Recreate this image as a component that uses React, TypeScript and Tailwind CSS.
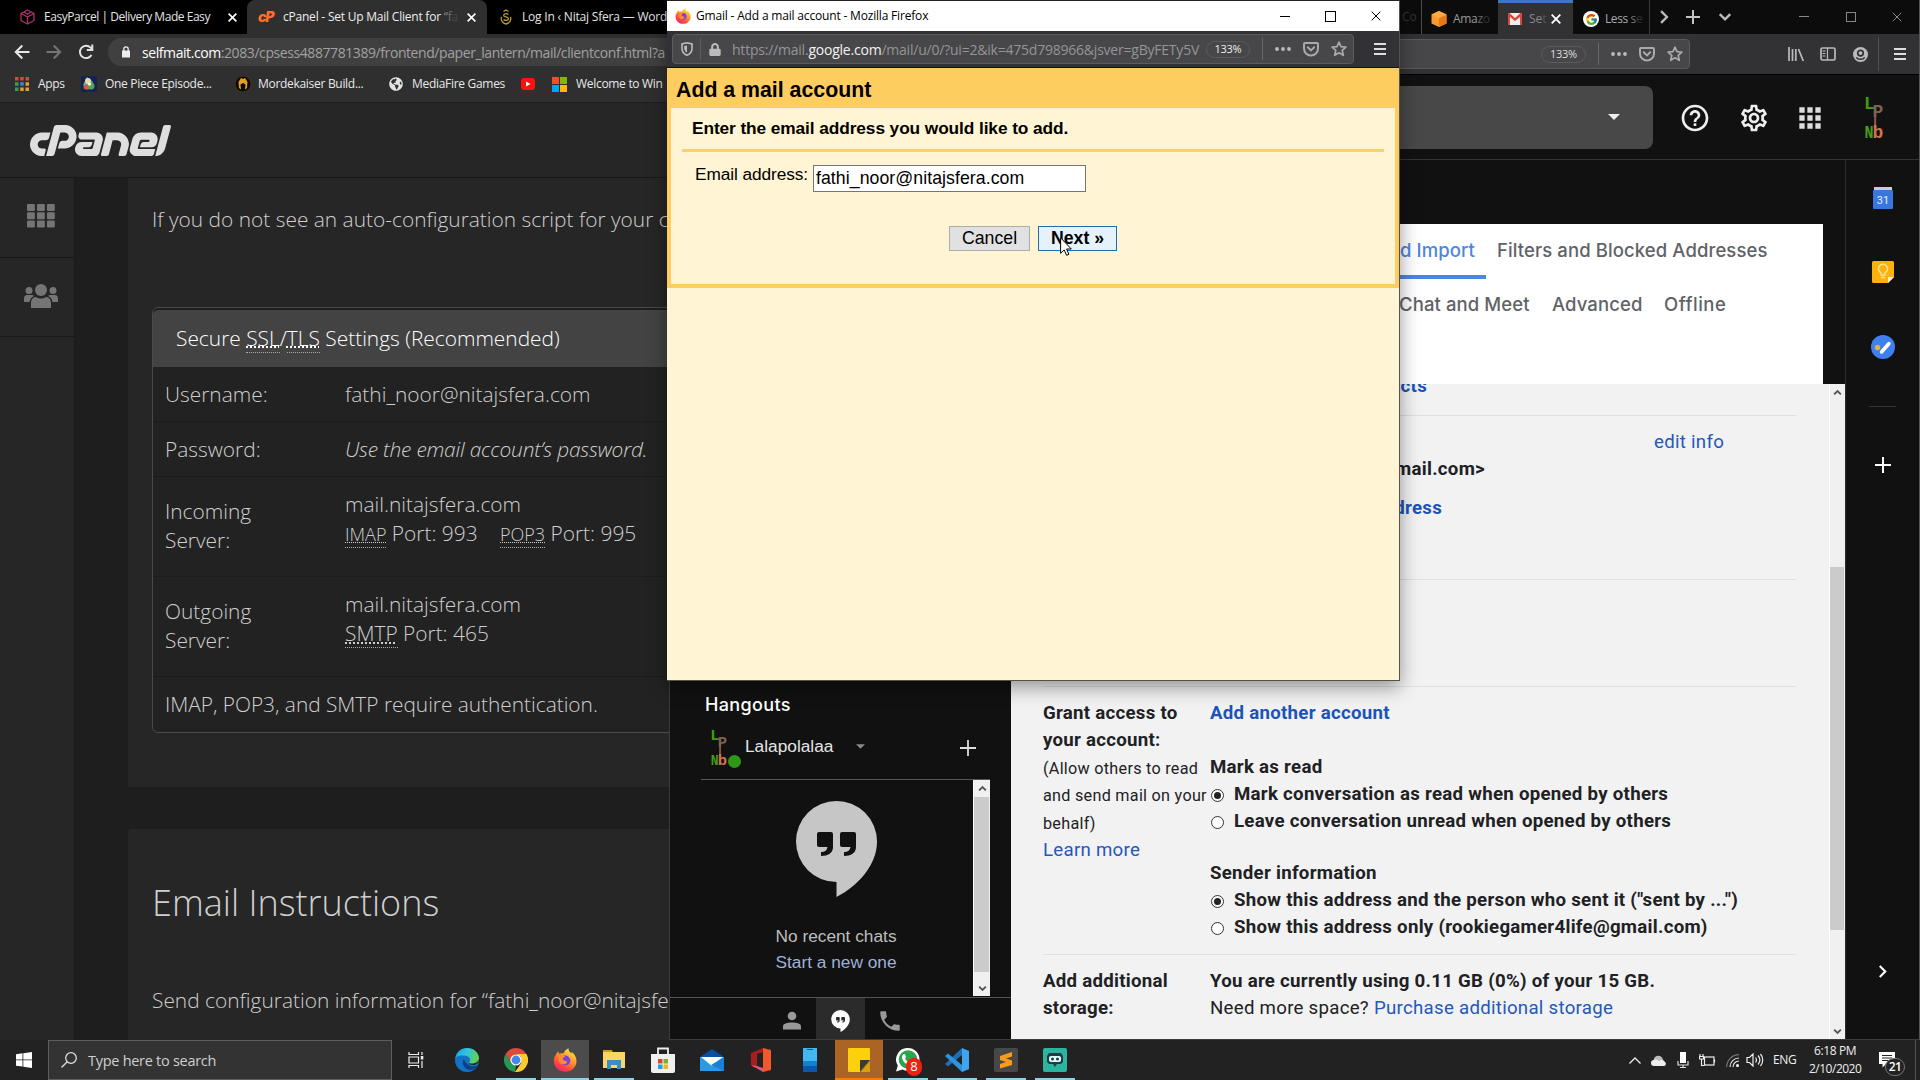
import React from "react";
import { MdApps, MdHelpOutline, MdOutlineSettings, MdPhone } from "react-icons/md";
import { FcGoogle } from "react-icons/fc";
import { FaGlobeAmericas, FaLock } from "react-icons/fa";
import { SiCpanel } from "react-icons/si";

const ui = "whitespace-nowrap shrink-0 font-['Open_Sans',sans-serif]";
const os = "whitespace-nowrap shrink-0 font-['Open_Sans',sans-serif] font-light";
const rb = "whitespace-nowrap shrink-0 font-['Roboto',sans-serif]";
const ar = "whitespace-nowrap shrink-0 font-['Liberation_Sans',Arial,sans-serif]";
const gs = "whitespace-nowrap shrink-0 font-['Inter',sans-serif]";

const X = ({ c }: { c: string }) => (
  <svg viewBox="0 0 10 10" className={c} fill="none" stroke="currentColor">
    <path d="M0.7 0.7L9.3 9.3M9.3 0.7L0.7 9.3" />
  </svg>
);

const Hamburger = ({ c }: { c: string }) => (
  <svg viewBox="0 0 12 12" className={c} fill="currentColor">
    <path d="M0 0h12v2H0zM0 5h12v2H0zM0 10h12v2H0z" />
  </svg>
);

const Dots = ({ c }: { c: string }) => (
  <svg viewBox="0 0 16 4" className={c} fill="currentColor">
    <circle cx="2" cy="2" r="1.9" /><circle cx="8" cy="2" r="1.9" /><circle cx="14" cy="2" r="1.9" />
  </svg>
);

const Pocket = ({ c }: { c: string }) => (
  <svg viewBox="0 0 16 16" className={c} fill="none" stroke="currentColor" strokeWidth="2">
    <path d="M2 2h12a1 1 0 0 1 1 1v4.5a7 7 0 0 1-14 0V3a1 1 0 0 1 1-1z" />
    <path d="M4.8 6.3L8 9.4l3.2-3.1" strokeLinecap="round" />
  </svg>
);

const Star = ({ c }: { c: string }) => (
  <svg viewBox="0 0 16 16" className={c} fill="none" stroke="currentColor" strokeWidth="1.7" strokeLinejoin="round">
    <path d="M8 1.2l2 4.5 4.9.5-3.7 3.2 1.1 4.9L8 11.8l-4.3 2.5 1.1-4.9L1.1 6.2 6 5.7z" />
  </svg>
);

const Firefox = ({ c }: { c: string }) => (
  <svg viewBox="0 0 24 24" className={c}>
    <defs>
      <linearGradient id="fx" x1="0.8" y1="0" x2="0.2" y2="1">
        <stop offset="0" stopColor="#fff04a" /><stop offset="0.4" stopColor="#ff9a2a" />
        <stop offset="0.75" stopColor="#ff4343" /><stop offset="1" stopColor="#e8207c" />
      </linearGradient>
    </defs>
    <path fill="url(#fx)" d="M3.2 6.2C4 4.5 5 3.4 5.3 3.2c0 1 .4 2 .9 2.6C8 5 9.500 5 10.500 5.400 11.500 2.500 14 .8 15.500.2c-.3 2 1 3.600 3 5.300.1-.7 0-1.300-.2-1.800C21.500 5.800 23.500 9 23.500 13c0 6-5 10.800-11.300 10.800S.8 19 .8 13c0-2.600.9-5 2.400-6.800z" />
    <circle cx="12.200" cy="12.500" r="5" fill="#7542e5" />
    <path fill="#ff8a2b" d="M5.500 8.500c2-1.500 5-1.400 7 .3-2 .3-3 1.500-2.600 2.600 1 1.700 3.500 1.200 4.600 2.300-1 2-3.500 3.300-6 2.300-2.500-1.200-3.800-4.500-3-7.500z" />
  </svg>
);

const Avatar = ({ c }: { c: string }) => (
  <svg viewBox="0 0 18 44" className={c} fontFamily="Liberation Mono" fontWeight="700">
    <text x="-1" y="13" fontSize="18" fill="#3f9b14">L</text>
    <text x="7.500" y="21" fontSize="18" fill="#7d6250">P</text>
    <rect x="9.200" y="20" width="2" height="12" fill="#8d5c48" />
    <text x="-0.500" y="42" fontSize="18" textLength="9" lengthAdjust="spacingAndGlyphs" fill="#4d9b14">N</text>
    <text x="7.500" y="42" fontSize="18" fill="#cf7350">b</text>
  </svg>
);

const HangoutsMark = ({ c, q }: { c: string; q: string }) => (
  <svg viewBox="0 0 81 96" className={c}>
    <path fill="currentColor" d="M40.500 0a40.500 40.500 0 0 0 0 81v15C62 85 81 64 81 40.500A40.500 40.500 0 0 0 40.500 0z" />
    <path fill={q} d="M23 31h12a2 2 0 0 1 2 2v13c0 6-5 9-12 9v-4c4 0 6-2 6.500-5H23a2 2 0 0 1-2-2V33a2 2 0 0 1 2-2zM46 31h12a2 2 0 0 1 2 2v13c0 6-5 9-12 9v-4c4 0 6-2 6.500-5H46a2 2 0 0 1-2-2V33a2 2 0 0 1 2-2z" />
  </svg>
);

const Chev = ({ c, d }: { c: string; d: string }) => (
  <svg viewBox="0 0 12 12" className={c} fill="none" stroke="currentColor" strokeWidth="2">
    <path d={d} />
  </svg>
);
const UP = "M1.500 8.500L6 4l4.500 4.500";
const DOWN = "M1.500 3.500L6 8l4.500-4.500";
const RIGHT = "M3.500 1L8.500 6l-5 5";

function ChromeWindow() {
  return (
    <section className="absolute left-0 top-0 flex h-[1040px] w-[669px] flex-col overflow-hidden bg-[#262626]">
      <div className="flex h-[34px] shrink-0 bg-black">
        <div className="flex w-[247px] shrink-0 items-center pl-5">
          <svg viewBox="0 0 15 16" className="h-4 w-[15px]" fill="none" stroke="#a83468" strokeWidth="1.300" strokeLinejoin="round">
            <path d="M7.500 1L14 4.500v7L7.500 15 1 11.500v-7zM1 4.500L7.500 8v7M7.500 8L14 4.500M4 3l3.500 2.200L11 3" />
          </svg>
          <span className={`${ui} ml-[9px] w-[166px] text-[12px] tracking-[-0.46px] text-[#e4e4e4]`}>EasyParcel | Delivery Made Easy</span>
          <X c="ml-[18px] h-[9px] w-[9px] text-white stroke-[1.800]" />
        </div>
        <div className="flex w-[240px] shrink-0 items-center rounded-t-lg bg-[#2f2f2f] pl-[11px]">
          <span className="w-[18px] shrink-0 whitespace-nowrap font-['Inter',sans-serif] text-[14px] font-black italic leading-[16px] tracking-[-1.2px] text-[#ff6c2c]">cP</span>
          <span className={`${ui} ml-[7px] w-[175px] text-[12px] tracking-[-0.22px] text-[#eee]`}>cPanel - Set Up Mail Client for <span className="text-[#84888c]">“</span><span className="text-[#6a6e72]">f</span><span className="text-[#45484b]">a</span></span>
          <X c="ml-[9px] h-[9px] w-[9px] text-white stroke-[1.800]" />
        </div>
        <div className="flex items-center pl-[13px]">
          <svg viewBox="0 0 12 16" className="h-4 w-3" fill="none" stroke="#b89a3e" strokeWidth="1.300">
            <path d="M3.500 2.500L6 1l2.500 1.500M8.500 5.500c-2-1.500-5-.8-4.800 1 .2 1.800 4.800 1.200 4.800 3.300 0 1.800-3 2-5 .8M1.500 8c-1 3 1 6.500 4.500 7 3.500-.5 5.500-4 4.500-7" />
          </svg>
          <span className={`${ui} ml-[10px] w-[145px] text-[12px] tracking-[-0.2px] text-[#e4e4e4]`}>Log In ‹ Nitaj Sfera — Word</span>
        </div>
      </div>
      <div className="flex h-[36px] shrink-0 items-center bg-[#2f2f2f] pl-[14px]">
        <svg viewBox="0 0 16 16" className="h-4 w-4" fill="none" stroke="#e8e8e8" strokeWidth="2"><path d="M15.500 8H2M8.300 1.500L1.800 8l6.500 6.500" /></svg>
        <svg viewBox="0 0 16 16" className="ml-4 h-4 w-4" fill="none" stroke="#757575" strokeWidth="2"><path d="M0.500 8H14M7.700 1.500L14.200 8l-6.500 6.500" /></svg>
        <svg viewBox="0 0 16 16" className="ml-4 h-4 w-4" fill="none" stroke="#e0e0e0" strokeWidth="2"><path d="M13.500 11A6.200 6.200 0 1 1 12.600 3.600L14 5M14.300 0.500v5.500h-5.500" /></svg>
        <div className="ml-[14px] flex h-7 flex-1 items-center rounded-l-full bg-[#404040] pl-[14px]">
          <svg viewBox="0 0 8 12" className="h-3 w-2" fill="none" stroke="#eee" strokeWidth="1.300"><rect x="0" y="4.500" width="8" height="7" fill="#eee" stroke="none" /><path d="M1.800 5V3a2.200 2.200 0 0 1 4.400 0v2" /></svg>
          <span className={`${ui} ml-[12px] w-[523px] text-[14px] tracking-[-0.42px] text-[#a0a0a0]`}><span className="text-white">selfmait.com</span>:2083/cpsess4887781389/frontend/paper_lantern/mail/clientconf.html?a</span>
        </div>
      </div>
      <div className="flex h-[33px] shrink-0 items-center border-b border-[#1d1d1d] bg-[#2f2f2f] pb-1 pl-[12px] [&>svg]:shrink-0">
        <svg viewBox="0 0 14 14" className="ml-[3px] h-[14px] w-[14px]">
          <path fill="#d9483b" d="M0 0h3.500v3.500H0zM5.200 0h3.500v3.500H5.200zM10.500 0H14v3.500h-3.500z" />
          <path fill="#3f9a5c" d="M0 5.200h3.500v3.500H0zM0 10.500h3.500V14H0z" /><path fill="#4682e0" d="M5.200 5.200h3.500v3.500H5.200z" />
          <path fill="#e0a52c" d="M10.500 5.200H14v3.500h-3.500zM5.200 10.500h3.500V14H5.200zM10.500 10.500H14V14h-3.500z" />
        </svg>
        <span className={`${ui} ml-[9px] w-[27px] text-[12px] tracking-[-0.3px] text-[#e8e8e8]`}>Apps</span>
        <svg viewBox="0 0 16 16" className="ml-4 h-4 w-4"><rect width="16" height="16" fill="#14234f" /><path fill="#4fb0c8" d="M6 1L12 6l-5 8-5-5z" /><circle cx="7" cy="5" r="3" fill="#e9dc9a" /><circle cx="10" cy="10" r="3.500" fill="#5aa35a" /><circle cx="5" cy="11" r="2.500" fill="#e05a34" /><circle cx="8.500" cy="8" r="1.500" fill="#fff" /></svg>
        <span className={`${ui} ml-[8px] w-[107px] text-[12px] tracking-[-0.3px] text-[#e8e8e8]`}>One Piece Episode...</span>
        <svg viewBox="0 0 16 16" className="ml-[23px] h-4 w-4"><circle cx="8" cy="8" r="7.800" fill="#0c0905" stroke="#5c4215" strokeWidth=".5" /><path fill="#e79c22" d="M8 3l2-1 2.500 4-.5 6-2 1.500.5-5L8 7 5.500 8.500l.5 5L4 12l-.5-6L6 2z" /></svg>
        <span className={`${ui} ml-[7px] w-[105px] text-[12px] tracking-[-0.3px] text-[#e8e8e8]`}>Mordekaiser Build...</span>
        <FaGlobeAmericas className="ml-[26px] h-[14px] w-[14px] text-[#e4e4e4]" />
        <span className={`${ui} ml-[9px] w-[92px] text-[12px] tracking-[-0.3px] text-[#e8e8e8]`}>MediaFire Games</span>
        <svg viewBox="0 0 14 12" className="ml-[17px] h-3 w-[14px]"><rect width="14" height="12" rx="3" fill="#ff1010" /><path d="M5 3.500v5L9.500 6z" fill="#fff" /></svg>
        <svg viewBox="0 0 15 15" className="ml-[17px] h-[15px] w-[15px]"><path fill="#f25022" d="M0 0h7v7H0z" /><path fill="#7fba00" d="M8 0h7v7H8z" /><path fill="#00a4ef" d="M0 8h7v7H0z" /><path fill="#ffb900" d="M8 8h7v7H8z" /></svg>
        <span className={`${ui} ml-[9px] w-[88px] text-[12px] tracking-[-0.3px] text-[#e8e8e8]`}>Welcome to Win</span>
      </div>
      <div className="flex h-[75px] shrink-0 items-center border-b border-[#191919] bg-[#262626] pl-[30px]">
        <SiCpanel className="-my-[60px] h-[141px] w-[141px] shrink-0 text-[#dedede]" />
      </div>
      <div className="flex min-h-0 flex-1">
        <aside className="w-[75px] shrink-0 border-r border-[#1a1a1a] bg-[#262626] text-[#757575]">
          <div className="flex h-[80px] items-center justify-center border-b border-[#191919] pb-[4px] pl-2">
            <svg viewBox="0 0 28 24" className="h-6 w-7" fill="currentColor">
              {[0, 9, 18].map((y, r) => [0, 10, 20].map((x) => <rect key={`${x}-${r}`} x={x} y={y * 0.92} width="7.800" height="7" rx="1" />))}
            </svg>
          </div>
          <div className="flex h-[79px] items-center justify-center border-b border-[#191919] pb-[2px] pl-2">
            <svg viewBox="0 0 34 24" className="h-6 w-[34px]" fill="currentColor">
              <circle cx="17" cy="6" r="6" /><circle cx="5" cy="6.500" r="3.500" /><circle cx="29" cy="6.500" r="3.500" />
              <path d="M7 24v-4c0-5 2-7 5-7 3 2 7 2 10 0 3 0 5 2 5 7v4zM0 18v-3c0-2.500 1-4 3-4h4.500c1 0 2 .5 2.500 1-2.500 1-4 3-4.500 6zM34 18v-3c0-2.500-1-4-3-4h-4.500c-1 0-2 .5-2.500 1 2.500 1 4 3 4.500 6z" />
            </svg>
          </div>
        </aside>
        <main className="flex min-w-0 flex-1 flex-col overflow-hidden bg-[#1e1e1e] pl-[53px] text-[20.900px] text-[#cfcfcf]">
          <div className="h-[609px] shrink-0 bg-[#262626] pl-[24px] pt-[26px]">
            <p className={`${os} w-[514px] leading-[30px]`}>If you do not see an auto-configuration script for your c</p>
            <div className="mt-[73px] w-[620px] rounded-md border border-[#4a4a4a] bg-[#222]">
              <div className="flex h-[59px] items-center rounded-t-md border-t-2 border-[#1f1f1f] bg-[#434343] pb-[2px] pl-[23px] text-white">
                <span className={`${os} w-[387px] leading-[30px]`}>
                  Secure <Abbr t="SSL" />/<Abbr t="TLS" /> Settings (Recommended)
                </span>
              </div>
              <div className="flex h-[55px] items-center border-b border-[#1c1c1c] pl-3 pt-[2px]">
                <span className={`${os} w-[104px] mr-[76px]`}>Username:</span>
                <span className={`${os} w-[246px]`}>fathi_noor@nitajsfera.com</span>
              </div>
              <div className="flex h-[55px] items-center border-b border-[#1c1c1c] pl-3 pt-[2px]">
                <span className={`${os} w-[96px] mr-[84px]`}>Password:</span>
                <span className={`${os} w-[303px] italic tracking-[-0.22px]`}>Use the email account’s password.</span>
              </div>
              <div className="flex h-[100px] border-b border-[#1c1c1c] pl-3 leading-[29.300px]">
                <div className="flex w-[180px] flex-col pt-[20px]">
                  <span className={`${os} w-[87px]`}>Incoming</span>
                  <span className={`${os} w-[66px]`}>Server:</span>
                </div>
                <div className="flex flex-col pt-[13px]">
                  <span className={`${os} w-[177px]`}>mail.nitajsfera.com</span>
                  <div className="flex">
                    <span className={`${os} w-[135px]`}><Abbr t="IMAP" small /> Port: 993</span>
                    <span className={`${os} ml-[20px] w-[140px]`}><Abbr t="POP3" small /> Port: 995</span>
                  </div>
                </div>
              </div>
              <div className="flex h-[100px] border-b border-[#1c1c1c] pl-3 leading-[29.300px]">
                <div className="flex w-[180px] flex-col pt-[20px]">
                  <span className={`${os} w-[87px]`}>Outgoing</span>
                  <span className={`${os} w-[66px]`}>Server:</span>
                </div>
                <div className="flex flex-col pt-[13px]">
                  <span className={`${os} w-[177px]`}>mail.nitajsfera.com</span>
                  <span className={`${os} w-[144px]`}><Abbr t="SMTP" /> Port: 465</span>
                </div>
              </div>
              <div className="flex h-[55px] items-center pl-3">
                <span className={`${os} w-[433px] tracking-[-0.03px]`}>IMAP, POP3, and SMTP require authentication.</span>
              </div>
            </div>
          </div>
          <div className="mt-[42px] flex-1 rounded-tl bg-[#262626] pl-[24px] pt-[49px]">
            <h2 className={`${os} w-[286px] text-[36px] leading-[50px]`}>Email Instructions</h2>
            <p className={`${os} mt-[57px] w-[517px] leading-[30px]`}>Send configuration information for “fathi_noor@nitajsfe</p>
          </div>
        </main>
      </div>
    </section>
  );
}

function Abbr({ t, small }: { t: string; small?: boolean }) {
  return (
    <span className={small ? "border-b border-dotted border-[#aaa] pb-[1px] text-[18px] underline decoration-dotted decoration-1" : "border-b border-dotted border-[#aaa] underline decoration-dotted decoration-2"}>{t}</span>
  );
}

function Tab({ children, c }: { children: React.ReactNode; c: string }) {
  return <div className={`flex shrink-0 items-center ${c}`}>{children}</div>;
}

function Radio({ on }: { on?: boolean }) {
  return (
    <span className="mt-[1px] flex h-[13px] w-[13px] shrink-0 items-center justify-center rounded-full border border-[#333] bg-white">
      {on && <span className="h-[7px] w-[7px] rounded-full bg-[#222]" />}
    </span>
  );
}

function FirefoxWindow() {
  return (
    <section className="absolute left-[669px] top-0 flex h-[1040px] w-[1251px] flex-col overflow-hidden border-b border-l border-r border-b-[#3c3c3c] border-l-[#3a3a3a] border-r-[#555] bg-[#111]">
      <div className="flex h-[34px] shrink-0 items-center bg-[#0c0c0c] pl-[730px]">
        <Tab c="h-full w-[22px] border-r border-[#4a4a4a] pl-[2px]"><span className={`${ui} text-[12px] text-[#333]`}>Co</span></Tab>
        <Tab c="h-full w-[76px] pl-[9px] pt-1">
          <svg viewBox="0 0 16 16" className="h-4 w-4"><path fill="#f79a2e" d="M8 0l7.500 3.500v9L8 16 .5 12.500v-9z" /><path fill="#e8761b" d="M8 7l7.500-3.500v9L8 16z" /><path fill="#ffa940" d="M8 0l7.500 3.500L8 7 .5 3.500z" /></svg>
          <span className={`${ui} ml-[6px] w-[34px] text-[12px] tracking-[-0.3px] text-[#999]`}>Ama<span className="text-[#666]">z</span><span className="text-[#333]">o</span></span>
        </Tab>
        <Tab c="h-full w-[75px] border-t-[3px] border-[#3a78c4] bg-[#323234] pl-[10px]">
          <svg viewBox="0 0 14 12" className="h-3 w-[14px]"><rect width="14" height="12" fill="#eee" /><path fill="#d6493c" d="M0 0h1.500L7 5l5.500-5H14v12h-2V4L7 8 2 4v8H0z" /></svg>
          <span className={`${ui} ml-[7px] w-[16px] text-[12px] text-[#888]`}>Se<span className="text-[#555]">t</span></span>
          <X c="ml-[6px] h-[10px] w-[10px] text-white stroke-[1.800]" />
        </Tab>
        <Tab c="h-full w-[77px] border-r border-[#3a3a3a] pl-[10px] pt-1">
          <span className="flex h-4 w-4 items-center justify-center rounded-full bg-white"><FcGoogle className="h-[13px] w-[13px]" /></span>
          <span className={`${ui} ml-[6px] w-[34px] text-[12px] tracking-[-0.4px] text-[#aaa]`}>Less <span className="text-[#777]">s</span><span className="text-[#333]">e</span></span>
        </Tab>
        <Chev c="ml-[7px] h-[14px] w-[14px] text-[#bbb]" d={RIGHT} />
        <svg viewBox="0 0 14 14" className="ml-[15px] h-[14px] w-[14px]" stroke="#c4c4c4" strokeWidth="2"><path d="M7 0v14M0 7h14" /></svg>
        <Chev c="ml-[18px] h-[14px] w-[14px] text-[#bbb]" d={DOWN} />
        <svg viewBox="0 0 10 10" className="ml-[67px] h-[10px] w-[10px]" stroke="#888"><path d="M0 4.500h10" /></svg>
        <span className="ml-[37px] h-[10px] w-[10px] border border-[#888]" />
        <X c="ml-[36px] h-[10px] w-[10px] text-[#888]" />
      </div>
      <div className="flex h-[41px] shrink-0 items-center border-b border-black bg-[#323234]">
        <div className="flex h-[30px] w-[1020px] shrink-0 items-center justify-end rounded-sm border border-[#5a5a5c] bg-[#474749] pr-[6px]">
          <span className={`${ui} flex h-[17px] w-[45px] items-center justify-center rounded-full border border-[#5a5a5c] text-[11px] tracking-[-0.3px] text-[#ddd]`}>133%</span>
          <span className="ml-[12px] h-[22px] w-px bg-[#6a6a6c]" />
          <Dots c="ml-[12px] h-1 w-4 text-[#bbb]" />
          <Pocket c="ml-[12px] h-4 w-4 text-[#aaa]" />
          <Star c="ml-[12px] h-4 w-4 text-[#aaa]" />
        </div>
        <svg viewBox="0 0 16 14" className="ml-[98px] h-[14px] w-4" fill="none" stroke="#bbb" strokeWidth="1.700"><path d="M1 0v14M4.500 2v12M7.800 2v12M10.500 2l4.800 12" /></svg>
        <svg viewBox="0 0 16 14" className="ml-4 h-[14px] w-4" fill="none" stroke="#bbb" strokeWidth="1.700"><rect x="1" y="1" width="14" height="12" rx="1.500" /><path d="M7.500 1v12M2.500 4h3M2.500 6.500h3M2.500 9h3" strokeWidth="1.200" /></svg>
        <svg viewBox="0 0 16 16" className="ml-[17px] h-[15px] w-[15px]"><circle cx="8" cy="8" r="8" fill="#bbb" /><circle cx="8" cy="6.500" r="3" fill="#bbb" stroke="#323234" strokeWidth="1.800" /><path d="M3.500 11c1.500 2.800 7.500 2.800 9 0" stroke="#323234" strokeWidth="1.600" fill="none" /></svg>
        <span className="ml-[10px] h-[34px] w-px bg-[#505052]" />
        <Hamburger c="ml-[15px] h-3 w-3 text-[#ddd]" />
      </div>
      <div className="flex h-[85px] shrink-0 items-center border-b border-[#333] pl-[240px]">
        <div className="flex h-[63px] w-[743px] shrink-0 items-center justify-end rounded-lg bg-[#484848] pr-[33px]">
          <svg viewBox="0 0 12 6" className="h-[6px] w-3"><path d="M0 0h12L6 6z" fill="#eee" /></svg>
        </div>
        <MdHelpOutline className="ml-[26px] mt-[1px] h-8 w-8 text-[#eee]" />
        <MdOutlineSettings className="ml-[27px] mt-[1px] h-8 w-8 text-[#eee]" />
        <MdApps className="ml-[24px] mt-[1px] h-8 w-8 text-[#ddd]" />
        <Avatar c="ml-[39px] mt-[2px] h-[44px] w-[18px]" />
      </div>
      <div className="flex min-h-0 flex-1">
        <nav className="flex w-[341px] shrink-0 flex-col justify-end">
          <h3 className={`${gs} ml-[35px] w-[86px] text-[18px] font-medium leading-[24px] tracking-[0.35px] text-white`}>Hangouts</h3>
          <div className="ml-[31px] flex h-[63px] w-[289px] items-start border-b border-[#555]">
            <div className="relative ml-[10px] mt-[12px]">
              <Avatar c="h-[38px] w-4" />
              <span className="absolute left-[17px] top-[26px] h-[13px] w-[13px] rounded-full bg-[#2c9a18]" />
            </div>
            <span className={`${ar} ml-[18px] mt-[17px] w-[88px] text-[17.300px] leading-[24px] text-[#e4e4e4]`}>Lalapolalaa</span>
            <svg viewBox="0 0 10 5" className="ml-[23px] mt-[27px] h-[5px] w-[9px]"><path d="M0 0h10L5 5z" fill="#888" /></svg>
            <svg viewBox="0 0 16 16" className="ml-[95px] mt-[23px] h-4 w-4" stroke="#ddd" strokeWidth="1.800"><path d="M8 0v16M0 8h16" /></svg>
          </div>
          <div className="ml-[31px] flex h-[217px] w-[289px] shrink-0">
            <div className="flex flex-1 flex-col items-center pr-[2px] pt-[21px]">
              <HangoutsMark c="h-[96px] w-[81px] text-[#c6c6c6]" q="#111" />
              <span className={`${ar} mt-[26px] w-[121px] text-[17.300px] leading-[26px] text-[#bdbdbd]`}>No recent chats</span>
              <span className={`${ar} w-[121px] text-[17.300px] leading-[26px] text-[#9fb0d8]`}>Start a new one</span>
            </div>
            <Scroll c="h-[216px] w-[17px] shrink-0" top="h-0" thumb="h-[175px]" />
          </div>
          <div className="flex h-[42px] shrink-0 border-t border-[#555] pl-[97px]">
            <div className="flex w-[49px] items-center justify-center pt-1"><svg viewBox="0 0 18 18" className="h-[19px] w-[18px]" fill="#999"><circle cx="9" cy="4.500" r="4.300" /><path d="M0 18v-3c0-3 4-4 9-4s9 1 9 4v3z" /></svg></div>
            <div className="flex w-[49px] items-center justify-center bg-[#2b2b2b] pt-1"><HangoutsMark c="h-[22px] w-[19px] text-white" q="#2b2b2b" /></div>
            <div className="flex w-[49px] items-center justify-center pt-1"><MdPhone className="h-[26px] w-[26px] text-[#999]" /></div>
          </div>
        </nav>
        <div className="flex w-[834px] shrink-0 flex-col overflow-hidden">
          <div className="mt-[64px] flex h-[160px] w-[812px] shrink-0 flex-col bg-white text-[18.500px] font-medium tracking-[0.1px] text-[#5f6368]">
            <div className="flex h-[55px] justify-end pr-[57px]">
              <span className="mr-[11px] flex w-[87px] items-center justify-end border-b-4 border-[#4d85e0] pr-[11px] pt-[3px] text-[#4d85e0]"><span className={`${gs}`}>d Import</span></span>
              <span className={`${gs} flex w-[269px] items-center pb-px`}>Filters and Blocked Addresses</span>
            </div>
            <div className="flex h-[51px] items-center justify-end pr-[97px]">
              <span className={`${gs} w-[131px]`}>Chat and Meet</span>
              <span className={`${gs} ml-[22px] w-[90px]`}>Advanced</span>
              <span className={`${gs} ml-[22px] w-[62px] tracking-[0.5px]`}>Offline</span>
            </div>
          </div>
          <div className="flex min-h-0 flex-1">
            <div className="flex flex-1 flex-col overflow-hidden bg-[#f2f2f2] pl-8 text-[18.670px] leading-[27px] tracking-[0.27px] text-[#202124]">
              <div className="h-[32px] w-[753px] shrink-0 border-b border-[#e0e0e0]">
                <p className={`${rb} -mt-[11px] pr-[369px] text-right font-bold text-[#1a54b8]`}>cts</p>
              </div>
              <div className="h-[164px] w-[753px] shrink-0 border-b border-[#e0e0e0] pt-[13px]">
                <p className={`${rb} ml-[611px] w-[70px] text-[#2558b8]`}>edit info</p>
                <p className={`${rb} pr-[311px] text-right font-bold`}>mail.com&gt;</p>
                <p className={`${rb} mt-[12px] pr-[354px] text-right font-bold text-[#1a54b8]`}>dress</p>
              </div>
              <div className="h-[107px] w-[753px] shrink-0 border-b border-[#e0e0e0]" />
              <div className="flex h-[268px] w-[753px] shrink-0 border-b border-[#e0e0e0] pt-[13px]">
                <div className="flex w-[167px] flex-col leading-[27.400px]">
                  <span className={`${rb} w-[135px] font-bold`}>Grant access to</span>
                  <span className={`${rb} w-[118px] font-bold`}>your account:</span>
                  <span className={`${rb} w-[156px] text-[16.200px]`}>(Allow others to read</span>
                  <span className={`${rb} w-[164px] text-[16.200px]`}>and send mail on your</span>
                  <span className={`${rb} w-[53px] text-[16.200px]`}>behalf)</span>
                  <span className={`${rb} w-[97px] text-[#2558b8]`}>Learn more</span>
                </div>
                <div className="flex flex-col font-bold">
                  <span className={`${rb} w-[180px] text-[#1a54b8]`}>Add another account</span>
                  <span className={`${rb} mt-[27px] w-[112px]`}>Mark as read</span>
                  <div className="flex items-center pl-[1px]"><Radio on /><span className={`${rb} ml-[10px] w-[434px]`}>Mark conversation as read when opened by others</span></div>
                  <div className="flex items-center pl-[1px]"><Radio /><span className={`${rb} ml-[10px] w-[437px]`}>Leave conversation unread when opened by others</span></div>
                  <span className={`${rb} mt-[25px] w-[167px]`}>Sender information</span>
                  <div className="flex items-center pl-[1px]"><Radio on /><span className={`${rb} ml-[10px] w-[500px]`}>Show this address and the person who sent it ("sent by ...")</span></div>
                  <div className="flex items-center pl-[1px]"><Radio /><span className={`${rb} ml-[10px] w-[474px]`}>Show this address only (rookiegamer4life@gmail.com)</span></div>
                </div>
              </div>
              <div className="flex w-[753px] pt-[13px]">
                <div className="flex w-[167px] flex-col font-bold">
                  <span className={`${rb} w-[125px]`}>Add additional</span>
                  <span className={`${rb} w-[70px]`}>storage:</span>
                </div>
                <div className="flex flex-col">
                  <span className={`${rb} w-[444px] font-bold`}>You are currently using 0.11 GB (0%) of your 15 GB.</span>
                  <div className="flex">
                    <span className={`${rb} w-[159px]`}>Need more space?</span>
                    <span className={`${rb} ml-[5px] w-[239px] text-[#2558b8]`}>Purchase additional storage</span>
                  </div>
                </div>
              </div>
            </div>
            <Scroll c="w-4 shrink-0" top="h-[166px]" thumb="h-[363px]" />
          </div>
        </div>
        <aside className="flex flex-1 flex-col items-center border-l border-[#2c2c2c] pt-[27px]">
          <svg viewBox="0 0 20 22" className="h-[22px] w-5"><rect x="1" width="18" height="5" fill="#ccc" /><rect y="3" width="20" height="19" rx="1" fill="#3a76e0" /><text x="10" y="17" fontSize="11" fontFamily="Roboto" fill="#e8f0ff" textAnchor="middle">31</text></svg>
          <svg viewBox="0 0 22 22" className="mt-[52px] h-[22px] w-[22px]"><path fill="#fbb30c" d="M1.500 0h19A1.500 1.500 0 0 1 22 1.500V16l-6 6H1.500A1.500 1.500 0 0 1 0 20.500v-19A1.500 1.500 0 0 1 1.500 0z" /><path fill="#fff3cf" d="M22 16l-6 6v-6z" /><path fill="none" stroke="#ffe49a" strokeWidth="1.400" d="M9 14v-2.200a4.500 4.500 0 1 1 4 0V14zM9 16.500h4" /></svg>
          <svg viewBox="0 0 24 24" className="mt-[52px] h-6 w-6"><circle cx="12" cy="12" r="12" fill="#3f80f0" /><circle cx="6.500" cy="12.500" r="2.700" fill="#e0b04c" /><path d="M10.500 17L18 8.500" stroke="#fff" strokeWidth="3.500" strokeLinecap="round" /></svg>
          <span className="mt-[47px] h-px w-[27px] bg-[#333]" />
          <svg viewBox="0 0 16 16" className="mt-[50px] h-4 w-4" stroke="#fff" strokeWidth="2"><path d="M8 0v16M0 8h16" /></svg>
          <Chev c="mt-auto mb-[61px] h-[13px] w-[13px] text-white" d={RIGHT} />
        </aside>
      </div>
    </section>
  );
}

function Scroll({ c, top, thumb }: { c: string; top: string; thumb: string }) {
  return (
    <div className={`flex flex-col items-stretch border-l border-white bg-[#f0f0f0] text-[#555] ${c}`}>
      <div className="flex h-[17px] shrink-0 items-center justify-center"><Chev c="h-[9px] w-[9px] stroke-[2.500]" d={UP} /></div>
      <div className={`shrink-0 ${top}`} />
      <div className={`mr-px shrink-0 bg-[#cbcbcb] ${thumb}`} />
      <div className="mt-auto flex h-[15px] shrink-0 items-center justify-center"><Chev c="h-[9px] w-[9px] stroke-[2.500]" d={DOWN} /></div>
    </div>
  );
}

function Popup() {
  return (
    <section className="absolute left-[667px] top-0 flex h-[681px] w-[733px] flex-col border border-l-0 border-[#55524a] border-t-[#222] bg-[#fff4d3] shadow-[0_6px_18px_rgba(0,0,0,0.4)]">
      <div className="flex h-[30px] shrink-0 items-center bg-white pl-2">
        <Firefox c="h-4 w-4" />
        <span className={`${ui} ml-[5px] w-[232px] text-[12px] tracking-[-0.18px] text-black`}>Gmail - Add a mail account - Mozilla Firefox</span>
        <svg viewBox="0 0 10 10" className="ml-auto h-[10px] w-[10px]" stroke="#000"><path d="M0 5.500h10" /></svg>
        <span className="ml-[35px] h-[11px] w-[11px] border border-black" />
        <X c="ml-[35px] mr-[18px] h-[10px] w-[10px] text-black" />
      </div>
      <div className="flex h-[37px] shrink-0 items-center border-b border-[#111] bg-[#323236] pl-[5px]">
        <div className="flex h-[30px] w-[682px] shrink-0 items-center rounded-sm border border-[#5c5c60] bg-[#474749] pl-2">
          <svg viewBox="0 0 12 14" className="h-[14px] w-3" fill="none" stroke="#bbb" strokeWidth="1.600"><path d="M6 .8L11 2v4.500c0 3-2 5.500-5 6.700-3-1.200-5-3.700-5-6.700V2z" /><path d="M6 3.500v7c-1.800-1-2.800-2.500-2.800-4.500v-2z" fill="#bbb" stroke="none" /></svg>
          <span className="ml-[7px] h-[22px] w-px bg-[#5c5c60]" />
          <FaLock className="ml-2 h-[13px] w-3 text-[#bbb]" />
          <span className={`${ui} ml-[11px] w-[467px] text-[14px] tracking-[-0.22px] text-[#949496]`}>https://mail.<span className="text-[#f2f2f2]">google.com</span>/mail/u/0/?ui=2&amp;ik=475d798966&amp;jsver=gByFETy5V</span>
          <span className={`${ui} ml-[7px] flex h-[17px] w-[44px] items-center justify-center rounded-full border border-[#5a5a5c] text-[11px] tracking-[-0.3px] text-[#eee]`}>133%</span>
          <span className="ml-[12px] h-[22px] w-px bg-[#66666a]" />
          <Dots c="ml-[12px] h-1 w-4 text-[#bbb]" />
          <Pocket c="ml-[12px] h-4 w-4 text-[#aaa]" />
          <Star c="ml-[12px] h-4 w-4 text-[#aaa]" />
        </div>
        <Hamburger c="ml-[20px] h-3 w-3 text-[#ddd]" />
      </div>
      <div className="flex h-[220px] shrink-0 flex-col bg-[#fecd5f] px-1 pb-1 text-black">
        <h1 className={`${ar} ml-[5px] h-10 w-[195px] text-[21.300px] font-bold leading-[45px]`}>Add a mail account</h1>
        <div className="flex flex-1 flex-col bg-[#fff4d3] pl-[11px] pr-[11px]">
          <p className={`${ar} ml-[10px] h-[41px] w-[376px] text-[17.300px] font-bold leading-[40px] tracking-[-0.09px]`}>Enter the email address you would like to add.</p>
          <span className="h-[3px] bg-[#fbd070]" />
          <div className="mt-[13px] flex pl-[13px]">
            <span className={`${ar} w-[113px] text-[17.300px] leading-[19px] tracking-[-0.09px]`}>Email address:</span>
            <div className="ml-[5px] flex h-[27px] w-[273px] items-center border border-[#767676] bg-white pb-[2px] pl-[2px]">
              <span className={`${ar} w-[208px] text-[17.700px] leading-[20px] tracking-[0.06px]`}>fathi_noor@nitajsfera.com</span>
            </div>
          </div>
          <div className="mt-[34px] flex pl-[267px]">
            <button className="flex h-[25px] w-[81px] items-center justify-center border border-[#adadad] bg-[#e1e1e1] pb-[2px]"><span className={`${ar} w-[55px] text-[17.700px] leading-[20px]`}>Cancel</span></button>
            <button className="ml-2 flex h-[25px] w-[79px] items-center justify-center border border-[#1a6fb0] bg-[#e5f1fb] pb-[2px]"><span className={`${ar} w-[53px] text-[17.700px] font-bold leading-[20px]`}>Next »</span></button>
          </div>
        </div>
      </div>
      <svg viewBox="0 0 12 19" className="absolute left-[393px] top-[236px] h-[19px] w-3"><path d="M.6.8v15.500l3.600-3.400 2.400 5.400 2.300-1-2.300-5.300h4.700z" fill="#fff" stroke="#000" strokeWidth="1" /></svg>
    </section>
  );
}

function TaskIcon({ c, children, line }: { c?: string; children: React.ReactNode; line?: string }) {
  return (
    <div className={`flex h-full w-12 shrink-0 flex-col ${c || ""}`}>
      <div className="flex h-[38px] items-center justify-center pt-[2px]">{children}</div>
      {line && <div className={`mx-auto h-[2px] ${line}`} />}
    </div>
  );
}

function Taskbar() {
  return (
    <footer className="absolute left-0 top-[1040px] flex h-[40px] w-[1920px] items-center overflow-hidden bg-[#222]">
      <div className="flex w-12 justify-center"><svg viewBox="0 0 16 16" className="h-4 w-4" fill="#fff"><path d="M0 2.200L6.500 1.300v6.200H0zM7.300 1.200L16 0v7.500H7.300zM0 8.300h6.500v6.300L0 13.700zM7.300 8.300H16V16l-8.700-1.200z" /></svg></div>
      <div className="flex h-[40px] w-[344px] shrink-0 items-center border border-[#5e5e5e] bg-[#333] pl-3">
        <svg viewBox="0 0 16 16" className="h-4 w-4" fill="none" stroke="#ddd" strokeWidth="1.300"><circle cx="10" cy="6" r="5.300" /><path d="M6.200 9.800L.5 15.500" /></svg>
        <span className={`${ui} ml-[11px] mt-[1px] w-[128px] text-[14.500px] tracking-[-0.28px] text-[#cfcfcf]`}>Type here to search</span>
      </div>
      <TaskIcon><svg viewBox="0 0 16 16" className="h-4 w-4" fill="none" stroke="#eee" strokeWidth="1.200"><path d="M1 0v2.500h9.500V0M1 16v-2.500h9.500V16M1 5h9.500v6H1zM14 0v3M14 9v7" /><rect x="12.800" y="4" width="2.500" height="3.500" fill="#eee" stroke="none" /></svg></TaskIcon>
      <div className="w-[3px] shrink-0" />
      <TaskIcon>
        <svg viewBox="0 0 24 24" className="h-6 w-6"><defs><linearGradient id="eg" x1="0" y1="0" x2="1" y2="0.300"><stop offset="0" stopColor="#1b9de2" /><stop offset="0.500" stopColor="#2fc2df" /><stop offset="1" stopColor="#5fd15a" /></linearGradient></defs>
          <circle cx="12" cy="12" r="12" fill="#1272c4" /><path fill="url(#eg)" d="M.3 10.500C1.500 4 6.500 0 12 0c7 0 12 5 12 10.500 0 4-3 6-6 6-3.500 0-4.500-1.500-3.500-2.500 2-2.500-.5-6.500-5-6.500C5 7.500 1.500 8 .3 10.500z" /><path fill="#0d3f8a" d="M9 11c-3 4 0 10 6 11 3 0 6-2 7.500-4.500-5 2-11 .5-13.500-6.500z" /><path fill="#222" d="M24 11c0 4-3 6-6 6-2.500 0-4.300-.8-4-2 3 1 8 1 10-4z" /></svg>
      </TaskIcon>
      <TaskIcon c="ml-[1px]" line="w-10 bg-[#8fd0e4]">
        <svg viewBox="0 0 24 24" className="h-6 w-6"><path fill="#dd4b3c" d="M12 0a12 12 0 0 1 10.400 6H12L6.800 15 1.600 6A12 12 0 0 1 12 0z" /><path fill="#229a54" d="M1.600 6l5.200 9L12 18l-1 6A12 12 0 0 1 1.600 6z" /><path fill="#fbcb30" d="M22.400 6A12 12 0 0 1 11 24l6.200-9L17 9l-5-3z" /><circle cx="12" cy="12" r="5.600" fill="#fff" /><circle cx="12" cy="12" r="4.400" fill="#4286f0" /></svg>
      </TaskIcon>
      <TaskIcon c="ml-[1px] bg-[#4c4c4c]" line="w-12 bg-[#8fd0e4]"><Firefox c="h-6 w-6" /></TaskIcon>
      <TaskIcon c="ml-[1px]" line="w-10 bg-[#8fd0e4]">
        <svg viewBox="0 0 22 20" className="h-5 w-[22px]"><path fill="#d99a1c" d="M0 0h9l1 3H0z" /><path fill="#fbd566" d="M0 2h22v16H0z" /><path fill="#3d8dc4" d="M4 10h14v9h-4v-4H8v4H4z" /></svg>
      </TaskIcon>
      <TaskIcon c="ml-[1px]">
        <svg viewBox="0 0 24 26" className="h-[26px] w-6"><path d="M7 9V1.500h10V9" fill="none" stroke="#eee" strokeWidth="1.800" /><path fill="#f0f0f0" d="M0 7h24v17a2 2 0 0 1-2 2H2a2 2 0 0 1-2-2z" /><path fill="#d9482b" d="M7 12h4.500v4.500H7z" /><path fill="#7dae28" d="M12.500 12H17v4.500h-4.500z" /><path fill="#2a9bdc" d="M7 17.500h4.500V22H7z" /><path fill="#f2b521" d="M12.500 17.500H17V22h-4.500z" /></svg>
      </TaskIcon>
      <TaskIcon c="ml-[1px]">
        <svg viewBox="0 0 24 24" className="h-6 w-6"><path fill="#0a4fa0" d="M0 9l12-8 12 8z" /><path fill="#2a9ae8" d="M0 9h24v14H0z" /><path fill="#fff" d="M1 9h22l-11 9z" /><path fill="#1b80d8" d="M24 9v14L11 17z" /></svg>
      </TaskIcon>
      <TaskIcon c="ml-[1px]">
        <svg viewBox="0 0 20 24" className="h-6 w-5"><path fill="#f1592b" d="M12 0l8 2v20l-8 2z" /><path fill="#a81e1e" d="M12 0v4L6 6v12l-3 2-3-3V5z" /><path fill="#e0567a" d="M0 17l6 1 6 2v4z" /></svg>
      </TaskIcon>
      <TaskIcon c="ml-[1px]">
        <svg viewBox="0 0 14 24" className="h-6 w-[14px]"><rect width="14" height="24" rx="1" fill="#1480d0" /><rect width="14" height="13" fill="#41b8ee" /><rect y="18" width="14" height="6" fill="#0c58ad" /><path d="M4 1.500h6" stroke="#0c58ad" /></svg>
      </TaskIcon>
      <TaskIcon c="ml-[1px] bg-[#ac6424]" line="w-12 bg-[#ff7b00]">
        <svg viewBox="0 0 22 24" className="h-6 w-[22px]"><path fill="#fcd00a" d="M1 0h20a1 1 0 0 1 1 1v11L12 24H1a1 1 0 0 1-1-1V1a1 1 0 0 1 1-1z" /><path fill="#3a3a34" d="M22 12H12v12z" /><path fill="#d6a207" d="M22 13v11h-9.500z" /></svg>
      </TaskIcon>
      <TaskIcon c="ml-[1px]" line="w-10 bg-[#8fd0e4]">
        <div className="relative h-6 w-6">
          <svg viewBox="0 0 24 24" className="h-6 w-6"><path fill="#fff" d="M12 0a11.500 11.500 0 0 1 0 23c-2 0-4-.5-5.500-1.400L0 23.500l1.800-6A11.500 11.500 0 0 1 12 0z" /><circle cx="12" cy="11.500" r="9.300" fill="#2aa54a" /><path fill="#fff" d="M7 6.500c1-1 2-.5 2.300.5l.7 2-1 1.500c1 2 2.500 3.300 4.500 4l1.500-1.300 2.500 1.300c0 2-2 3-4 2.700C9.500 16.500 6 12.500 6 9c0-1 .3-1.800 1-2.500z" /></svg>
          <span className="absolute left-[10px] top-[10px] flex h-[18px] w-4 items-center justify-center rounded-full bg-[#ee2010] font-['Open_Sans',sans-serif] text-[13px] text-white">8</span>
        </div>
      </TaskIcon>
      <TaskIcon c="ml-[1px]" line="w-10 bg-[#8fd0e4]">
        <svg viewBox="0 0 24 24" className="h-6 w-6"><path fill="#1d6fb8" d="M17 0v7L3 18.500 0 16z" /><path fill="#2f93dc" d="M0 8l3-2.500L17 17v7z" /><path fill="#3ea5ee" d="M17 0l7 3v18l-7 3z" /></svg>
      </TaskIcon>
      <TaskIcon c="ml-[1px]" line="w-10 bg-[#8fd0e4]">
        <svg viewBox="0 0 24 24" className="h-6 w-6"><rect width="24" height="24" rx="2" fill="#484848" /><path fill="#fb9a1c" d="M18 4v4.500l-6 2 6 2V17L6 20.500V16l6-2-6-2V8z" /></svg>
      </TaskIcon>
      <TaskIcon c="ml-[1px]" line="w-10 bg-[#8fd0e4]">
        <svg viewBox="0 0 24 24" className="h-6 w-6"><rect width="24" height="24" rx="2" fill="#2bb5a0" /><path fill="#223c42" d="M6 5h12l2 3v6l-2 2h-4l-2 3-2-3H6l-2-2V8z" /><rect x="6" y="8" width="12" height="6" rx="2" fill="#dff" /><circle cx="9.500" cy="11" r="1.500" fill="#223c42" /><circle cx="14.500" cy="11" r="1.500" fill="#223c42" /></svg>
      </TaskIcon>
      <div className="ml-auto flex shrink-0 items-center pr-[4px]">
        <svg viewBox="0 0 12 7" className="h-[7px] w-3" fill="none" stroke="#eee" strokeWidth="1.300"><path d="M.5 6.500L6 1l5.500 5.500" /></svg>
        <svg viewBox="0 0 16 11" className="ml-[10px] h-[11px] w-4"><path fill="#bbb" d="M3 7a4.500 4.500 0 0 1 8.500-3.500L13 7z" /><path fill="#eee" d="M3 11a3 3 0 0 1 0-6c2-1 4 0 5 1 2-2 5-1 5.500.5A2.500 2.500 0 0 1 13.500 11z" /></svg>
        <svg viewBox="0 0 12 16" className="ml-[10px] h-4 w-3"><rect x="3" width="6" height="11" fill="#fff" /><path d="M1 9v4h10V9M6 13v2.500M3 15.500h6" fill="none" stroke="#ddd" strokeWidth="1.200" /></svg>
        <svg viewBox="0 0 17 12" className="ml-[10px] h-3 w-[17px]" fill="none" stroke="#eee" strokeWidth="1.200"><rect x="5.500" y="3" width="9.500" height="8" /><path d="M15.500 5.500v3M1 0v2M4 0v2M.5 2.500h4v2.500h-4zM2.500 5v6.500h3" /></svg>
        <svg viewBox="0 0 13 13" className="ml-[10px] h-[13px] w-[13px]" fill="none" stroke="#999" strokeWidth="1.200"><path d="M.7 13A12.300 12.300 0 0 1 13 .7" stroke="#777" /><path d="M4 13a9 9 0 0 1 9-9M7 13a6 6 0 0 1 6-6" stroke="#ddd" /><circle cx="11.500" cy="11.500" r="1.500" fill="#fff" stroke="none" /></svg>
        <svg viewBox="0 0 18 14" className="ml-[7px] h-[14px] w-[18px]" fill="none" stroke="#eee" strokeWidth="1.200"><path d="M1 4.500h2.500L7 1v12L3.500 9.500H1zM9.500 4.500c1.200 1.500 1.200 3.500 0 5M12 2.500c2.300 2.700 2.300 6.300 0 9M14.500 1c3 3.500 3 8.500 0 12" /></svg>
        <span className={`${ui} ml-[9px] w-[23px] text-[12px] tracking-[-0.4px] text-[#eee]`}>ENG</span>
        <div className="ml-[13px] flex flex-col items-center leading-[18px] text-[#eee]">
          <span className={`${ui} w-[42px] text-[12px] tracking-[-0.38px]`}>6:18 PM</span>
          <span className={`${ui} w-[52px] text-[12px] tracking-[-0.5px]`}>2/10/2020</span>
        </div>
        <div className="relative ml-[18px] mr-[20px] h-4 w-4">
          <svg viewBox="0 0 16 16" className="h-4 w-4"><path fill="#fff" d="M0 0h16v12H7l-3.500 3.500V12H0z" /><path d="M3 3.500h10M3 6h10M3 8.500h7" stroke="#222" /></svg>
          <span className="absolute left-[6px] top-[6px] flex h-[18px] w-[20px] items-center justify-center rounded-full border border-[#777] bg-[#222] font-['Open_Sans',sans-serif] text-[12px] font-semibold tracking-[-0.5px] text-white">21</span>
        </div>
        <span className="h-10 w-px bg-[#555]" />
      </div>
    </footer>
  );
}

export default function App() {
  return (
    <div className="relative h-[1080px] w-[1920px] overflow-hidden bg-black">
      <ChromeWindow />
      <FirefoxWindow />
      <Popup />
      <Taskbar />
    </div>
  );
}
